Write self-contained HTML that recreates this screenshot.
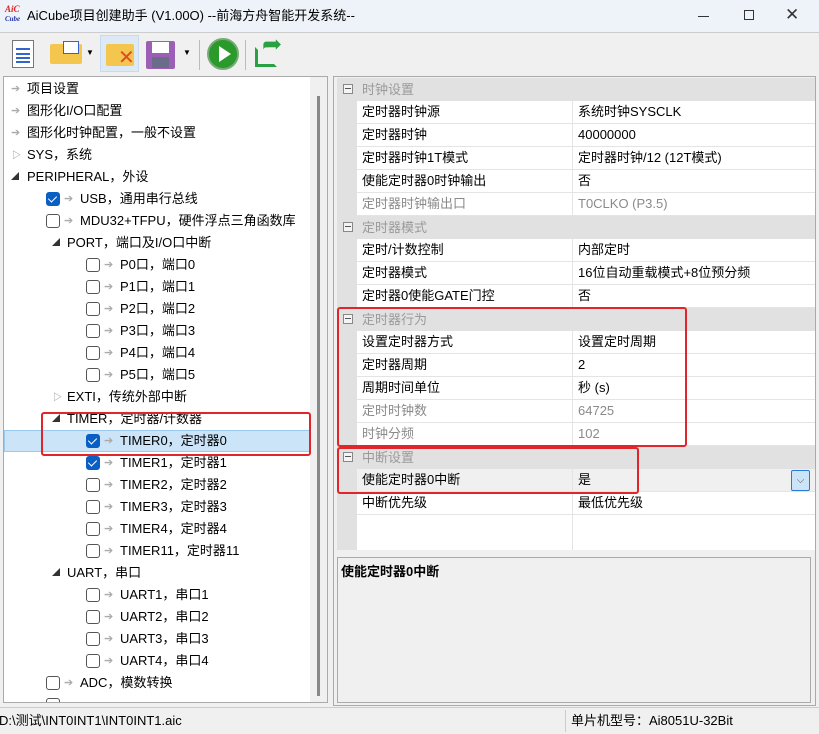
<!DOCTYPE html>
<html><head><meta charset="utf-8"><style>
*{margin:0;padding:0;box-sizing:border-box}
body{width:819px;height:734px;background:#f0f0f0;font-family:"Liberation Sans","Noto Sans CJK SC",sans-serif;font-size:13px;color:#000;position:relative;overflow:hidden}
.a{position:absolute}
.t{position:absolute;white-space:nowrap;line-height:22px;height:22px}
.cb{position:absolute;width:14px;height:14px;border:1px solid #555;border-radius:3px;background:#fff}
.cb.on{background:#0a5fc4;border-color:#0a5fc4}
.cb.on:after{content:"";position:absolute;left:3px;top:1px;width:4px;height:7px;border:solid #fff;border-width:0 1.6px 1.6px 0;transform:rotate(45deg)}
.ar{position:absolute;color:#aaa;font-size:11px;line-height:22px}
.pr{position:absolute;left:357px;width:458px;height:23px;border-bottom:1px solid #e4e4e4;background:#fff;line-height:22px}
.pr span{position:absolute;left:5px}
.pr b{font-weight:normal;position:absolute;left:221px}
.pr:before{content:"";position:absolute;left:215px;top:0;bottom:0;border-left:1px solid #e4e4e4}
.hd{position:absolute;left:337px;width:478px;height:23px;background:#e1e1e1;color:#9a9a9a;line-height:23px}
.hd span{position:absolute;left:25px}
.hd i{position:absolute;left:6px;top:6px;width:10px;height:10px;border:1px solid #888;background:#f4f4f4}
.hd i:after{content:"";position:absolute;left:1px;top:3px;width:6px;height:1px;background:#555}
.g{color:#8a8a8a}
.red{position:absolute;border:2.5px solid #e0262a;border-radius:3px}
</style></head><body>
<!-- title -->
<div class="a" style="left:0;top:0;width:819px;height:33px;background:#eef3f9;border-bottom:1px solid #ccc"></div>
<div class="a" style="left:5px;top:5px;font:italic bold 9px 'Liberation Serif',serif;color:#d22;line-height:9px">AiC<br><span style="color:#23a;font-size:7px">Cube</span></div>
<div class="t" style="left:27px;top:5px">AiCube项目创建助手 (V1.00O) --前海方舟智能开发系统--</div>
<div class="a" style="left:698px;top:16px;width:11px;height:1px;background:#333"></div>
<div class="a" style="left:744px;top:10px;width:10px;height:10px;border:1px solid #333"></div>
<div class="t" style="left:785px;top:4px;font-size:17px;color:#333">✕</div>
<!-- toolbar -->
<div class="a" style="left:12px;top:40px;width:22px;height:28px;background:#fff;border:1px solid #777"></div>
<div class="a" style="left:16px;top:48px;width:14px;height:2px;background:#36c;box-shadow:0 5px 0 #36c,0 9px 0 #36c,0 13px 0 #36c"></div>
<div class="a" style="left:50px;top:44px;width:32px;height:20px;background:#f5c64e;border-radius:2px"></div>
<div class="a" style="left:63px;top:41px;width:16px;height:13px;background:#fff;border:1px solid #36c"></div>
<div class="t" style="left:86px;top:42px;font-size:8px">▼</div>
<div class="a" style="left:100px;top:35px;width:39px;height:37px;background:#dde9f5;border:1px solid #c8dbee"></div>
<div class="a" style="left:106px;top:44px;width:28px;height:22px;background:#f5c64e;border-radius:2px"></div>
<div class="t" style="left:118px;top:47px;color:#e04a2a;font-size:20px">✕</div>
<div class="a" style="left:146px;top:41px;width:29px;height:28px;background:#9b5fb5;border-radius:2px"></div>
<div class="a" style="left:152px;top:42px;width:17px;height:11px;background:#fff"></div>
<div class="a" style="left:152px;top:57px;width:17px;height:11px;background:#6b6b8a"></div>
<div class="t" style="left:183px;top:42px;font-size:8px">▼</div>
<div class="a" style="left:199px;top:40px;width:1px;height:30px;background:#bbb"></div>
<div class="a" style="left:207px;top:38px;width:32px;height:32px;border-radius:50%;background:#2a9a2a;border:2px solid #7a7"></div>
<div class="a" style="left:219px;top:46px;width:0;height:0;border-left:12px solid #fff;border-top:8px solid transparent;border-bottom:8px solid transparent"></div>
<div class="a" style="left:245px;top:40px;width:1px;height:30px;background:#bbb"></div>
<div class="a" style="left:255px;top:47px;width:22px;height:20px;border:3px solid #2aa044;border-right-color:transparent;border-top-color:transparent"></div>
<div class="t" style="left:262px;top:34px;color:#2aa044;font-size:24px">➦</div>
<!-- left panel -->
<div class="a" style="left:3px;top:76px;width:325px;height:627px;background:#fff;border:1px solid #aaa"></div>
<div class="a" style="left:310px;top:77px;width:17px;height:625px;background:#f0f0f0"></div>
<div class="a" style="left:317px;top:96px;width:3px;height:600px;background:#888"></div>
<div class="a" style="left:4px;top:430px;width:306px;height:22px;background:#cce4f7;border:1px solid #99c9ef"></div>

<div class="ar" style="left:11px;top:78px">➔</div><div class="t" style="left:27px;top:78px">项目设置</div>
<div class="ar" style="left:11px;top:100px">➔</div><div class="t" style="left:27px;top:100px">图形化I/O口配置</div>
<div class="ar" style="left:11px;top:122px">➔</div><div class="t" style="left:27px;top:122px">图形化时钟配置，一般不设置</div>
<div class="ar" style="left:12px;top:144px;color:#888;font-size:9px">▷</div><div class="t" style="left:27px;top:144px">SYS，系统</div>
<div class="ar" style="left:11px;top:166px;color:#333;font-size:8px">◢</div><div class="t" style="left:27px;top:166px">PERIPHERAL，外设</div>
<div class="cb on" style="left:46px;top:192px"></div><div class="ar" style="left:64px;top:188px">➔</div><div class="t" style="left:80px;top:188px">USB，通用串行总线</div>
<div class="cb" style="left:46px;top:214px"></div><div class="ar" style="left:64px;top:210px">➔</div><div class="t" style="left:80px;top:210px">MDU32+TFPU，硬件浮点三角函数库</div>
<div class="ar" style="left:52px;top:232px;color:#333;font-size:8px">◢</div><div class="t" style="left:67px;top:232px">PORT，端口及I/O口中断</div>
<div class="cb" style="left:86px;top:258px"></div><div class="ar" style="left:104px;top:254px">➔</div><div class="t" style="left:120px;top:254px">P0口，端口0</div>
<div class="cb" style="left:86px;top:280px"></div><div class="ar" style="left:104px;top:276px">➔</div><div class="t" style="left:120px;top:276px">P1口，端口1</div>
<div class="cb" style="left:86px;top:302px"></div><div class="ar" style="left:104px;top:298px">➔</div><div class="t" style="left:120px;top:298px">P2口，端口2</div>
<div class="cb" style="left:86px;top:324px"></div><div class="ar" style="left:104px;top:320px">➔</div><div class="t" style="left:120px;top:320px">P3口，端口3</div>
<div class="cb" style="left:86px;top:346px"></div><div class="ar" style="left:104px;top:342px">➔</div><div class="t" style="left:120px;top:342px">P4口，端口4</div>
<div class="cb" style="left:86px;top:368px"></div><div class="ar" style="left:104px;top:364px">➔</div><div class="t" style="left:120px;top:364px">P5口，端口5</div>
<div class="ar" style="left:53px;top:386px;color:#888;font-size:9px">▷</div><div class="t" style="left:67px;top:386px">EXTI，传统外部中断</div>
<div class="ar" style="left:52px;top:408px;color:#333;font-size:8px">◢</div><div class="t" style="left:67px;top:408px">TIMER，定时器/计数器</div>
<div class="cb on" style="left:86px;top:434px"></div><div class="ar" style="left:104px;top:430px">➔</div><div class="t" style="left:120px;top:430px">TIMER0，定时器0</div>
<div class="cb on" style="left:86px;top:456px"></div><div class="ar" style="left:104px;top:452px">➔</div><div class="t" style="left:120px;top:452px">TIMER1，定时器1</div>
<div class="cb" style="left:86px;top:478px"></div><div class="ar" style="left:104px;top:474px">➔</div><div class="t" style="left:120px;top:474px">TIMER2，定时器2</div>
<div class="cb" style="left:86px;top:500px"></div><div class="ar" style="left:104px;top:496px">➔</div><div class="t" style="left:120px;top:496px">TIMER3，定时器3</div>
<div class="cb" style="left:86px;top:522px"></div><div class="ar" style="left:104px;top:518px">➔</div><div class="t" style="left:120px;top:518px">TIMER4，定时器4</div>
<div class="cb" style="left:86px;top:544px"></div><div class="ar" style="left:104px;top:540px">➔</div><div class="t" style="left:120px;top:540px">TIMER11，定时器11</div>
<div class="ar" style="left:52px;top:562px;color:#333;font-size:8px">◢</div><div class="t" style="left:67px;top:562px">UART，串口</div>
<div class="cb" style="left:86px;top:588px"></div><div class="ar" style="left:104px;top:584px">➔</div><div class="t" style="left:120px;top:584px">UART1，串口1</div>
<div class="cb" style="left:86px;top:610px"></div><div class="ar" style="left:104px;top:606px">➔</div><div class="t" style="left:120px;top:606px">UART2，串口2</div>
<div class="cb" style="left:86px;top:632px"></div><div class="ar" style="left:104px;top:628px">➔</div><div class="t" style="left:120px;top:628px">UART3，串口3</div>
<div class="cb" style="left:86px;top:654px"></div><div class="ar" style="left:104px;top:650px">➔</div><div class="t" style="left:120px;top:650px">UART4，串口4</div>
<div class="cb" style="left:46px;top:676px"></div><div class="ar" style="left:64px;top:672px">➔</div><div class="t" style="left:80px;top:672px">ADC，模数转换</div>
<div class="cb" style="left:46px;top:698px;height:4px;border-bottom:none;border-radius:3px 3px 0 0"></div>

<!-- right panel -->
<div class="a" style="left:333px;top:76px;width:483px;height:630px;border:1px solid #aaa;background:#f0f0f0"></div>
<div class="a" style="left:337px;top:78px;width:20px;height:472px;background:#e1e1e1"></div>
<div class="a" style="left:357px;top:78px;width:458px;height:472px;background:#fff"></div>
<div class="a" style="left:572px;top:515px;width:1px;height:35px;background:#e4e4e4"></div>

<div class="hd" style="top:78px"><i></i><span>时钟设置</span></div>
<div class="pr" style="top:101px"><span>定时器时钟源</span><b>系统时钟SYSCLK</b></div>
<div class="pr" style="top:124px"><span>定时器时钟</span><b>40000000</b></div>
<div class="pr" style="top:147px"><span>定时器时钟1T模式</span><b>定时器时钟/12 (12T模式)</b></div>
<div class="pr" style="top:170px"><span>使能定时器0时钟输出</span><b>否</b></div>
<div class="pr g" style="top:193px"><span>定时器时钟输出口</span><b>T0CLKO (P3.5)</b></div>
<div class="hd" style="top:216px"><i></i><span>定时器模式</span></div>
<div class="pr" style="top:239px"><span>定时/计数控制</span><b>内部定时</b></div>
<div class="pr" style="top:262px"><span>定时器模式</span><b>16位自动重载模式+8位预分频</b></div>
<div class="pr" style="top:285px"><span>定时器0使能GATE门控</span><b>否</b></div>
<div class="hd" style="top:308px"><i></i><span>定时器行为</span></div>
<div class="pr" style="top:331px"><span>设置定时器方式</span><b>设置定时周期</b></div>
<div class="pr" style="top:354px"><span>定时器周期</span><b>2</b></div>
<div class="pr" style="top:377px"><span>周期时间单位</span><b>秒 (s)</b></div>
<div class="pr g" style="top:400px"><span>定时时钟数</span><b>64725</b></div>
<div class="pr g" style="top:423px"><span>时钟分频</span><b>102</b></div>
<div class="hd" style="top:446px"><i></i><span>中断设置</span></div>
<div class="pr" style="top:469px;background:#f0f0f0"><span>使能定时器0中断</span><b>是</b></div>
<div class="a" style="left:791px;top:470px;width:19px;height:21px;background:#cce4f7;border:1px solid #2a7ad8;border-radius:2px;font-size:10px;text-align:center;line-height:19px;color:#555">⌵</div>
<div class="pr" style="top:492px"><span>中断优先级</span><b>最低优先级</b></div>

<div class="a" style="left:337px;top:557px;width:474px;height:146px;border:1px solid #aaa;background:#f0f0f0"></div>
<div class="t" style="left:341px;top:561px;font-weight:bold">使能定时器0中断</div>

<div class="red" style="left:41px;top:412px;width:270px;height:44px"></div>
<div class="red" style="left:337px;top:307px;width:350px;height:140px"></div>
<div class="red" style="left:337px;top:447px;width:302px;height:47px"></div>

<!-- status -->
<div class="a" style="left:0;top:707px;width:819px;height:1px;background:#ccc"></div>
<div class="t" style="left:-1px;top:710px">D:\测试\INT0INT1\INT0INT1.aic</div>
<div class="a" style="left:565px;top:710px;width:1px;height:22px;background:#ccc"></div>
<div class="t" style="left:571px;top:710px">单片机型号：Ai8051U-32Bit</div>
</body></html>
